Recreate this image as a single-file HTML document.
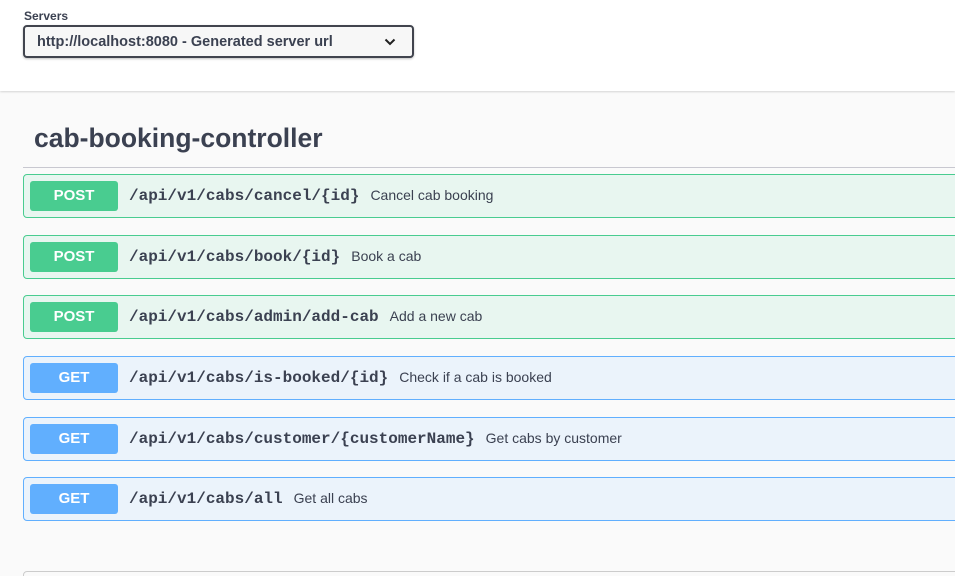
<!DOCTYPE html>
<html><head><meta charset="utf-8"><style>
*{box-sizing:border-box;margin:0;padding:0}
html,body{width:955px;height:576px;overflow:hidden}
body{background:#fafafa;font-family:"Liberation Sans",sans-serif;color:#3b4151;position:relative}
.top{position:absolute;left:0;top:0;width:955px;height:91px;background:#fff;box-shadow:0 1px 2px rgba(0,0,0,.15)}
.lbl{position:absolute;left:24px;top:9px;font-size:12px;font-weight:bold;color:#3b4151}
.sel{position:absolute;left:23px;top:25px;width:391px;height:33px;border:2px solid #41444e;border-radius:4px;background:#f7f7f7;box-shadow:0 1px 2px rgba(0,0,0,.25);font-size:14.5px;font-weight:bold;padding:7px 0 0 12px}
.sel svg{position:absolute;right:16px;top:11px}
h2{position:absolute;left:34px;top:123px;font-size:26.5px;font-weight:bold;color:#3b4151}
.hr{position:absolute;left:23px;top:167px;width:940px;height:1px;background:#c8c8d0}
.op{position:absolute;left:23px;width:940px;height:44px;border:1px solid;border-radius:4px}
.post{background:#e8f6f0;border-color:#49cc90}
.get{background:#ebf3fb;border-color:#61affe}
.b{position:absolute;left:6px;top:6px;width:88px;height:30px;border-radius:3px;color:#fff;font-weight:bold;font-size:15px;text-align:center;line-height:29px}
.post .b{background:#49cc90}.get .b{background:#61affe}
.p{position:absolute;left:105px;top:12px;font-family:"Liberation Mono",monospace;font-weight:bold;font-size:16px;color:#3b4151;white-space:nowrap}
.p span{font-family:"Liberation Sans",sans-serif;font-weight:normal;font-size:14px;margin-left:11px}
.bot{position:absolute;left:23px;top:571px;width:940px;height:20px;border:1px solid #ccc;border-radius:4px}
</style></head><body>
<div class="top">
<div class="lbl">Servers</div>
<div class="sel">http://localhost:8080 - Generated server url<svg width="12" height="8" viewBox="0 0 12 8"><path d="M1.5 1.5L6 6L10.5 1.5" stroke="#222" stroke-width="2" fill="none"/></svg></div>
</div>
<h2>cab-booking-controller</h2>
<div class="hr"></div>
<div class="op post" style="top:174px"><div class="b">POST</div><div class="p">/api/v1/cabs/cancel/{id}<span>Cancel cab booking</span></div></div>
<div class="op post" style="top:235px"><div class="b">POST</div><div class="p">/api/v1/cabs/book/{id}<span>Book a cab</span></div></div>
<div class="op post" style="top:295px"><div class="b">POST</div><div class="p">/api/v1/cabs/admin/add-cab<span>Add a new cab</span></div></div>
<div class="op get" style="top:356px"><div class="b">GET</div><div class="p">/api/v1/cabs/is-booked/{id}<span>Check if a cab is booked</span></div></div>
<div class="op get" style="top:417px"><div class="b">GET</div><div class="p">/api/v1/cabs/customer/{customerName}<span>Get cabs by customer</span></div></div>
<div class="op get" style="top:477px"><div class="b">GET</div><div class="p">/api/v1/cabs/all<span>Get all cabs</span></div></div>
<div class="bot"></div>
</body></html>
